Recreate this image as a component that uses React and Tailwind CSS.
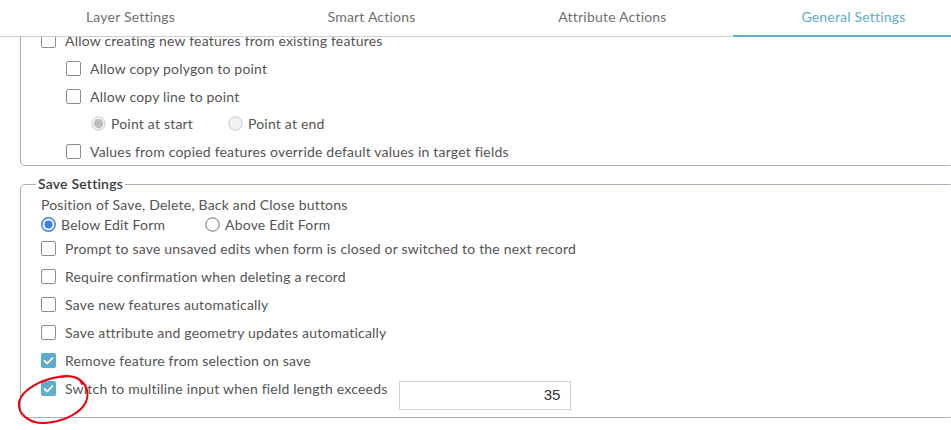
import React from "react";

function Checkbox({ checked }) {
  if (checked) {
    return (
      <span className="w-[15px] h-[15px] shrink-0 rounded-[2px] bg-[#5eadca] flex items-center justify-center">
        <svg width="15" height="15" viewBox="0 0 15 15">
          <polyline points="3.5,7.8 6.3,10.5 11.5,5" fill="none" stroke="#ffffff" strokeWidth="1.8" strokeLinecap="round" strokeLinejoin="round" />
        </svg>
      </span>
    );
  }
  return <span className="w-[15px] h-[15px] shrink-0 rounded-[2px] border border-[#8c8c8c] bg-white" />;
}

function Radio({ checked, disabled }) {
  const ring = disabled ? "#c9c9c9" : checked ? "#3d7ef6" : "#6f6f6f";
  const dot = disabled ? "#bdbdbd" : "#3d7ef6";
  return (
    <svg width="15" height="15" viewBox="0 0 15 15" className="shrink-0">
      <circle cx="7.5" cy="7.5" r="6.7" fill={disabled ? "#f2f2f2" : "#ffffff"} stroke={ring} strokeWidth={checked && !disabled ? 1.5 : 1} />
      {checked && <circle cx="7.5" cy="7.5" r={disabled ? 4.6 : 4} fill={dot} />}
    </svg>
  );
}

function CheckRow({ checked, label, className = "" }) {
  return (
    <div className={"flex items-center gap-[9px] h-[28px] " + className}>
      <Checkbox checked={checked} />
      <span className="whitespace-nowrap">{label}</span>
    </div>
  );
}

export default function App() {
  const tabs = ["Layer Settings", "Smart Actions", "Attribute Actions", "General Settings"];
  return (
    <div className="relative w-[951px] h-[430px] overflow-hidden bg-white font-['Lato',sans-serif] text-[14px] tracking-[0.2px] text-[#545454]">
      {/* Tabs */}
      <div className="flex h-[37px] border-b border-[#cfcfcf] pl-[10px]">
        {tabs.map((t, i) => (
          <div
            key={t}
            className={
              "w-[241px] shrink-0 flex items-center justify-center pb-[3px] " +
              (i === 3 ? "h-[37px] border-b-2 border-[#5eadca] text-[#5eadca]" : "text-[#707070]")
            }
          >
            {t}
          </div>
        ))}
      </div>

      {/* Scrolled body */}
      <div className="h-[393px] overflow-hidden pl-[20px]">
        <div className="-mt-[18px]">
          {/* First group (scrolled, top hidden) */}
          <div className="w-[934px] border border-[#a9b1bf] rounded-[5px] pt-[6px] pl-[20px]">
            <CheckRow label="Allow creating new features from existing features" className="h-[27px]" />
            <div className="pl-[25px]">
              <CheckRow label="Allow copy polygon to point" />
              <CheckRow label="Allow copy line to point" className="h-[27px]" />
              <div className="flex items-center h-[27px] pl-[25px]">
                <div className="flex items-center gap-[5px] w-[137px]">
                  <Radio checked disabled />
                  <span>Point at start</span>
                </div>
                <div className="flex items-center gap-[5px]">
                  <Radio disabled />
                  <span>Point at end</span>
                </div>
              </div>
              <CheckRow label="Values from copied features override default values in target fields" className="h-[27px]" />
            </div>
          </div>

          {/* Save Settings */}
          <fieldset className="mt-[8px] w-[934px] border border-[#a9b1bf] rounded-[5px] pl-[15px] pb-[7px]">
            <legend className="px-[2px] leading-[20px] font-semibold text-[#3a3a3a]">Save Settings</legend>
            <div className="pl-[5px]">
              <div className="h-[21px] flex items-center">Position of Save, Delete, Back and Close buttons</div>
              <div className="h-[19px] flex items-center">
                <div className="flex items-center gap-[5px] w-[164px]">
                  <Radio checked />
                  <span>Below Edit Form</span>
                </div>
                <div className="flex items-center gap-[5px]">
                  <Radio />
                  <span>Above Edit Form</span>
                </div>
              </div>
              <CheckRow label="Prompt to save unsaved edits when form is closed or switched to the next record" />
              <CheckRow label="Require confirmation when deleting a record" />
              <CheckRow label="Save new features automatically" />
              <CheckRow label="Save attribute and geometry updates automatically" />
              <CheckRow checked label="Remove feature from selection on save" />
              <div className="flex items-start">
                <CheckRow checked label="Switch to multiline input when field length exceeds" />
                <div className="ml-[12px] mt-[7px] w-[172px] h-[29px] border border-[#d3d3d3] flex items-center justify-end pr-[10px] font-['Liberation_Sans',sans-serif] text-[15px] tracking-normal text-[#333333]">
                  35
                </div>
              </div>
            </div>
          </fieldset>

          {/* Next group (cut off) */}
          <fieldset className="mt-[7px] w-[934px] border border-[#a9b1bf] rounded-[5px] pl-[15px] pb-[5px]">
            <legend className="px-[2px] leading-[20px] font-semibold text-[#3a3a3a]">Snapping Options</legend>
            <div className="h-[40px]" />
          </fieldset>
        </div>
      </div>

      {/* Hand-drawn red annotation */}
      <svg className="absolute left-0 top-0 pointer-events-none" width="951" height="430" viewBox="0 0 951 430">
        <path
          d="M 82 384 C 80 376, 68 375, 58 377 C 40 380, 22 390, 19 402 C 17 414, 30 424, 45 423 C 62 422, 80 414, 86 402 C 90 392, 86 381, 74 377 C 70 376, 65 376, 61 377"
          fill="none"
          stroke="#e8000b"
          strokeWidth="2"
          strokeLinecap="round"
        />
      </svg>
    </div>
  );
}
